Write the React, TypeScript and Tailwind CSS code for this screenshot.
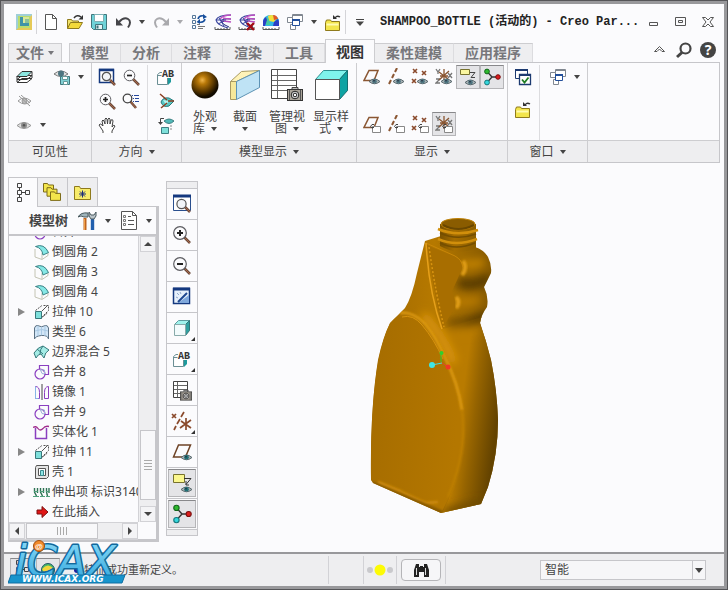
import React, { useState } from "react";
import clsx from "clsx";

type IcProps = { w?: number; h?: number; children?: React.ReactNode };

// Base wrapper for all toolbar drawings
const Ic = ({ w = 18, h = 18, children }: IcProps) => (
  <svg width={w} height={h} viewBox={`0 0 ${w} ${h}`} fill="none" aria-hidden="true" className="shrink-0">
    {children}
  </svg>
);

const Caret = ({ color = "#444" }: { color?: string }) => (
  <svg width="6" height="4" viewBox="0 0 6 4" aria-hidden="true" className="inline-block shrink-0">
    <path d="M0 0h6L3 4z" fill={color} />
  </svg>
);

// ---- shared icon fragments ----

const EyeShape = ({ x = 0, y = 0, c = "#4d7580" }) => (
  <g transform={`translate(${x} ${y})`}>
    <path d="M0 3.500Q5.500-1.500 11 3.500Q5.500 8 0 3.500z" fill="#aab3b6" stroke="#59686d" />
    <circle cx="5.500" cy="3.300" r="2.300" fill={c} />
    <circle cx="5" cy="2.700" r=".8" fill="#223" />
  </g>
);

const TagShape = ({ x = 0, y = 0 }) => (
  <g transform={`translate(${x} ${y})`} stroke="#444">
    <path d="M2.500 2.500h8v6h-8z" fill="#fff" stroke="#888" />
    <path d="M4 .5H2L.5 2.500l2 2M1 3.500h3" />
  </g>
);

const Handle = ({ d = "M11 11l6 6" }) => (
  <>
    <path d={d} stroke="#6b4a3a" strokeWidth="2.600" />
    <path d={d} stroke="#a8674a" strokeWidth="1" />
  </>
);

const FolderShape = ({ x = 0, y = 0 }) => (
  <g transform={`translate(${x} ${y})`}>
    <path d="M.5 3.500V11.500h14v-9h-8l-1-1.500h-4z" fill="#f3e54b" stroke="#8f7a1c" />
    <path d="M1.500 4.500h12v2h-12z" fill="#fffbb0" />
  </g>
);

const CameraShape = ({ x = 0, y = 0, s = 1 }) => (
  <g transform={`translate(${x} ${y}) scale(${s})`}>
    <path d="M5 2V.5h6V2" fill="#bbb" stroke="#444" />
    <rect x=".5" y="2.500" width="15" height="11" fill="#aaa49a" stroke="#333" />
    <path d="M2.500 3v10M13.500 3v10" stroke="#555" />
    <circle cx="8" cy="8" r="3.800" fill="#ddd" stroke="#222" />
    <circle cx="8" cy="8" r="1.800" fill="#fff" stroke="#222" />
  </g>
);

// ---- quick access icons ----

const AppIcon = () => (
  <Ic w={16} h={16}>
    <rect width="16" height="16" fill="#9fcfd8" />
    <path d="M0 16h16V1z" fill="#e6ca58" />
    <path d="M2 2h12v12H2z" fill="#b9dc6e" />
    <path d="M4 3v9h9V9H7V3z" fill="#3f93a8" />
    <path d="M7 3h6v6H7z" fill="#d9e89a" />
    <path d="M9 5h4v4H9z" fill="#8cc09a" />
  </Ic>
);
const NewIcon = () => (
  <Ic w={14} h={16}>
    <path d="M1.500.5h7l4 4v11h-11z" fill="#fff" stroke="#555" />
    <path d="M8.500.5v4h4" stroke="#555" />
  </Ic>
);
const OpenIcon = () => (
  <Ic w={18} h={16}>
    <path d="M1.500 14.500v-9h4l1 1.500h6v2" fill="#f2e36a" stroke="#8f7a1c" />
    <path d="M1.500 14.500l3-6h12l-3.500 6z" fill="#f4d93a" stroke="#8f7a1c" />
    <path d="M8 4q3-4 7-1" stroke="#333" strokeWidth="1.500" />
    <path d="M17 1v4.500h-4.500z" fill="#333" />
  </Ic>
);
const SaveIcon = () => (
  <Ic w={16} h={16}>
    <path d="M.5.5h15v15h-13l-2-2z" fill="#6ed3d8" stroke="#41767c" />
    <path d="M3.500.5h9v7h-9z" fill="#fff" stroke="#7fb1b5" />
    <path d="M4.500 10.500h7v5h-7z" fill="#e9f5f6" stroke="#41767c" />
    <path d="M5.500 11.500h2v3h-2z" fill="#41767c" />
  </Ic>
);
const UndoIcon = ({ flip = false, color = "#454549" }) => (
  <Ic w={17} h={16}>
    <g transform={flip ? "translate(17 0) scale(-1 1)" : undefined}>
      <path d="M4 8q5-5.500 9-3t0 8.500" stroke={color} strokeWidth="2" />
      <path d="M1 4v7.500h7z" fill={color} />
    </g>
  </Ic>
);
const RegenIcon = () => (
  <Ic w={16} h={16}>
    <path d="M1.500 1.500h3v3h-3zM1.500 6.500h3v3h-3zM1.500 11.500h3v3h-3z" stroke="#579" />
    <path d="M7 12.500h7M7 14.500h5M6 10.500h3" stroke="#777" />
    <path d="M7 5q1-4 6-3M14 5q-1 4-6 3" stroke="#174f9c" strokeWidth="1.600" />
    <path d="M12 0l4 3-4 2zM9 5L5.500 8 9 10z" fill="#174f9c" />
  </Ic>
);
const MeshShape = () => (
  <>
    <path d="M17 1Q4 1 2 6q1 5 12 8" stroke="#35409c" strokeWidth="1.200" />
    <path d="M17 5Q9 4 7 7q2 4 8 6" stroke="#222b80" />
    <path d="M17 1Q9 1 6 5M17 8q-6-1-10-1M17 5q-5 0-8-1" stroke="#b94fc0" strokeWidth="1.400" />
    <path d="M5 4l5 8M2 6l10 0M4 10l6-3" stroke="#35409c" />
    <path d="M1 13v2.500h15V13M4 14v2M7 14v2M10 14v2M13 14v2" stroke="#555" />
  </>
);
const MeshIcon = () => <Ic w={18} h={17}><MeshShape /></Ic>;
const MeshOffIcon = () => (
  <Ic w={18} h={17}>
    <MeshShape />
    <path d="M9 9l7 7M16 9l-7 7" stroke="#a00d16" strokeWidth="2.400" />
  </Ic>
);
const RainbowIcon = () => (
  <Ic w={18} h={17}>
    <path d="M1 12V6q2-5 8-5t8 5v6z" fill="#31b8e8" />
    <path d="M6 2q5-3 9 2l-3 4-5-1z" fill="#f2df3a" />
    <path d="M11 1q4 0 5 4l-4 1z" fill="#e05a28" />
    <path d="M4 3q4 1 4 8H4z" fill="#46c8a0" />
    <path d="M1 12V7q1-3 3-4l1 3-2 6zM12 8l4-3 1 3v4h-6z" fill="#2c3fc4" />
    <path d="M1 13v2.500h16V13M4 14v2M7 14v2M10 14v2M13 14v2" stroke="#555" />
  </Ic>
);
const WindowsIcon = () => (
  <Ic w={16} h={16}>
    <path d="M5.500.5h10v7h-10z" fill="#fff" stroke="#808790" />
    <path d="M5 1.500h11" stroke="#808790" />
    <path d="M.5 3.500h5v5h-5zM3.500 10.500h5v5h-5z" fill="#fff" stroke="#808790" />
    <path d="M5.500 5.500h7v6h-7z" fill="#fff" stroke="#234f9a" />
    <path d="M5 6h8" stroke="#234f9a" strokeWidth="2" />
  </Ic>
);
const CloseFolderIcon = () => (
  <Ic w={16} h={17}>
    <FolderShape y={5} />
    <path d="M10 4q2-3 5-1" stroke="#333" strokeWidth="1.300" />
    <path d="M8 1v4h4z" fill="#333" />
  </Ic>
);

// ---- ribbon: visibility ----

const LayersIcon = () => (
  <Ic w={17} h={14}>
    <path d="M1 12.500h10l5-4H6zM1 9.500h10l5-4H6z" fill="#fff" stroke="#333" />
    <path d="M1 6.500h10l5-5H6z" fill="#8be6e0" stroke="#333" />
    <path d="M1 6v6M16 2v6" stroke="#333" />
  </Ic>
);
const EyeSaveIcon = () => (
  <Ic w={17} h={17}>
    <path d="M0 5Q7-1 14 5q-7 5-14 0z" fill="#e3e3e3" stroke="#777" />
    <circle cx="7" cy="4.500" r="3" fill="#4d7580" />
    <path d="M6.500 7.500h9v8h-9z" fill="#7fd0d4" stroke="#41767c" />
    <path d="M8.500 7.500h5v3h-5zM9.500 12.500h4v3h-4z" fill="#fff" stroke="#699" />
  </Ic>
);
const EyeOffIcon = () => (
  <Ic w={15} h={12}>
    <path d="M1 6q6-6 13 0-6 6-13 0z" stroke="#999" />
    <circle cx="7.500" cy="6" r="2.500" fill="#bbb" stroke="#999" />
    <path d="M2 1l11 10M4 0l9 8" stroke="#999" />
  </Ic>
);
const EyeGreyIcon = () => (
  <Ic w={16} h={11}>
    <path d="M1 5.500q7-6 14 0-7 6-14 0z" fill="#ddd" stroke="#999" />
    <circle cx="8" cy="5.200" r="3" fill="#8c8c8c" />
    <circle cx="8" cy="5.200" r="1.200" fill="#555" />
  </Ic>
);

// ---- ribbon: orientation ----

const RefitIcon = () => (
  <Ic w={18} h={18}>
    <path d="M1.500 1.500h14v13h-14z" fill="#fff" stroke="#14387f" strokeWidth="1.500" />
    <path d="M1 2h15" stroke="#14387f" strokeWidth="2.500" />
    <Handle d="M12 12l5 5" />
    <circle cx="8.500" cy="8.500" r="4.200" fill="#f2f5f8" stroke="#555" strokeWidth="1.200" />
  </Ic>
);
const ZoomIcon = ({ plus = false }) => (
  <Ic w={20} h={20}>
    <Handle d="M12 12l6 6" />
    <circle cx="8" cy="8" r="6.300" fill="#fbfbfd" stroke="#5d5d62" strokeWidth="1.200" />
    <path d={plus ? "M5 8h6M8 5v6" : "M5 8h6"} stroke="#222" strokeWidth="2" />
  </Ic>
);
const SmallZoomIcon = ({ plus = false }) => (
  <Ic w={17} h={17}>
    <Handle d="M10 10l6 6" />
    <circle cx="6.500" cy="6.500" r="5.300" fill="#fbfbfd" stroke="#5d5d62" />
    <path d={plus ? "M4 6.500h5M6.500 4v5" : "M4 6.500h5"} stroke="#222" strokeWidth="1.700" />
  </Ic>
);
const ZoomListIcon = () => (
  <Ic w={18} h={16}>
    <Handle d="M8 8l6 7" />
    <circle cx="5.500" cy="5.500" r="4.300" fill="#fbfbfd" stroke="#444" strokeWidth="1.300" />
    <path d="M10 2.500h1M12 2.500h5M11 5.500h1M13 5.500h4M11 8.500h1M13 8.500h4" stroke="#27489b" />
  </Ic>
);
const HandIcon = () => (
  <Ic w={18} h={17}>
    <path
      d="M5 16v-2L1 8q1-2 3 0l1 1-1-5q1-2 2 0l1 3V2q1-2 2 0l.5 5L10 2q1-2 2 0v5l1-4q2-1 2 1l-1 6q2-3 3-1l-3 5v2"
      fill="#fff"
      stroke="#444"
    />
  </Ic>
);

const AbShape = () => (
  <>
    <path d="M5 3.500H3L.5 5.500v10h10V9M.5 6.500h4" stroke="#6b8f94" />
    <path d="M11 16l3-3V9h-3z" fill="#1d9a9c" />
    <path d="M2 8h8v7H2z" fill="#fff" />
    <text x="5" y="8" fontFamily="'Liberation Mono', monospace" fontSize="10" fontWeight="700" fill="#333">AB</text>
  </>
);
const NamedViewIcon = () => <Ic w={18} h={17}><AbShape /></Ic>;
const ReorientIcon = () => (
  <Ic w={17} h={16}>
    <path d="M3 9q2-5 8-4l5 3-5 5q-6 2-8-4z" fill="#58c7c4" stroke="#2b7a7c" />
    <path d="M5 7l6 1-3 4z" fill="#b9f2ee" />
    <path d="M2 1l7 6M3 15l6-5M10 8h6" stroke="#8b3f22" strokeWidth="1.500" />
  </Ic>
);
const PrevViewIcon = () => (
  <Ic w={17} h={17}>
    <path d="M6 4q5-4 10 0-5 5-10 0z" fill="#4fb9b8" stroke="#3d7f82" />
    <path d="M3.500 10.500h7v6h-7z" fill="#7ee0da" stroke="#3d7f82" />
    <path d="M6 1.500H2.500v5" stroke="#444" />
    <path d="M0 5h5L2.500 8z" fill="#444" />
    <path d="M13 8v5" stroke="#888" strokeDasharray="2 1" />
  </Ic>
);

// ---- ribbon: model display ----

const SphereIcon = () => (
  <Ic w={30} h={32}>
    <defs>
      <radialGradient id="ball" cx=".4" cy=".32" r=".62">
        <stop offset="0" stopColor="#f0b54a" />
        <stop offset=".25" stopColor="#b87808" />
        <stop offset=".7" stopColor="#573600" />
        <stop offset="1" stopColor="#120b00" />
      </radialGradient>
    </defs>
    <circle cx="15" cy="16" r="13.500" fill="url(#ball)" />
  </Ic>
);
const SectionIcon = () => (
  <Ic w={32} h={32}>
    <path d="M1.500 12.500l11-10 18-1-23 11z" fill="#fff3b8" stroke="#a99b62" />
    <path d="M1.500 12.500h6v18h-6z" fill="#f6e89a" stroke="#a99b62" />
    <path d="M7.500 12.500l23-11v17l-23 12z" fill="#bfe3f5" stroke="#5d93b4" />
  </Ic>
);
const SheetShape = () => (
  <>
    <path d="M.5.5h25v29H.5z" fill="#fff" stroke="#444" />
    <path d="M1 6.500h24M1 11.500h24M1 16.500h24M1 21.500h24M6.500 1v28" stroke="#666" />
  </>
);
const ManageViewIcon = () => (
  <Ic w={33} h={33}>
    <SheetShape />
    <CameraShape x={16} y={18} />
  </Ic>
);
const StyleIcon = () => (
  <Ic w={33} h={32}>
    <path d="M.5 10.500l8-9h24l-8 9z" fill="#7ff3ec" stroke="#2f8f90" />
    <path d="M24.500 10.500l8-9v20l-8 9z" fill="#0fa3a3" stroke="#156e70" />
    <path d="M.5 10.500h24v20H.5z" fill="#fff" stroke="#555" />
  </Ic>
);

// ---- ribbon: show ----

type Overlay = "eye" | "tag";
const Over = ({ kind }: { kind: Overlay }) => (kind === "eye" ? <EyeShape x={6} y={10} /> : <TagShape x={7} y={9} />);

const PlaneIcon = ({ over }: { over: Overlay }) => (
  <Ic><path d="M1 12.500h10l4-10H6z" stroke="#8a5632" strokeWidth="1.500" /><Over kind={over} /></Ic>
);
const AxisIcon = ({ over }: { over: Overlay }) => (
  <Ic><path d="M10 0L8 4M7 6l-2 4M4 12l-2 4" stroke="#8a5632" strokeWidth="2" /><Over kind={over} /></Ic>
);
const PointIcon = ({ over }: { over: Overlay }) => (
  <Ic>
    <path d="M2 1l4 4M6 1L2 5M11 3l4 4M15 3l-4 4M1 11l4 4M5 11l-4 4" stroke="#8a4a2c" strokeWidth="1.600" />
    <Over kind={over} />
  </Ic>
);
const CsysIcon = ({ over }: { over: Overlay }) => (
  <Ic>
    <path d="M1 1l2 3 2-3M3 4v2M1 11h4l-4 4h4M13 5l4 5M17 5l-4 5" stroke="#777" strokeWidth="1.300" />
    <path d="M9 1v13M4 4l9 7M14 3L4 12M5 8h8" stroke="#8a5632" strokeWidth="1.300" />
    <Over kind={over} />
  </Ic>
);
const NoteIcon = () => (
  <Ic>
    <path d="M1.500 1.500h9v5h-9z" fill="#fbf7a0" stroke="#77722e" />
    <path d="M11 4.500h5l-4 5h4" stroke="#444" />
    <EyeShape x={6} y={11} />
  </Ic>
);
const SpinIcon = ({ size = 18 }) => (
  <svg width={size} height={size} viewBox="0 0 18 18" fill="none" aria-hidden="true">
    <path d="M4 3.500l5 5.500h6M9 9l-5 5.500" stroke="#333" strokeWidth="1.300" />
    <circle cx="4" cy="3.500" r="2.400" fill="#2eb82e" stroke="#12661a" />
    <circle cx="15" cy="9" r="2.300" fill="#dd1d1d" stroke="#7b1010" />
    <circle cx="4" cy="14.500" r="2.400" fill="#35d6dc" stroke="#14787c" />
  </svg>
);
const ActivateIcon = () => (
  <Ic>
    <path d="M1.500 1.500h12v9h-12z" fill="#fff" stroke="#1c3a70" />
    <path d="M1 2h13" stroke="#1c3a70" strokeWidth="2" />
    <path d="M5.500 6.500h11v10h-11z" fill="#fff" stroke="#1c3a70" strokeWidth="1.300" />
    <path d="M5 7h12" stroke="#1c3a70" strokeWidth="2" />
    <path d="M8 11.500l2.500 3 4-5" stroke="#1e7d22" strokeWidth="1.800" />
  </Ic>
);

// ---- tree icons ----

const MergeIcon = () => (
  <Ic w={16} h={16}>
    <path d="M5.500 5.500v-4h9v9h-4" stroke="#8a3fc0" strokeWidth="1.200" />
    <circle cx="6" cy="10" r="5" stroke="#8a3fc0" strokeWidth="1.200" />
    <path d="M6.500 6h4v4q-3 1-4-4z" stroke="#9fb4d8" />
  </Ic>
);
const RoundIcon = () => (
  <Ic w={16} h={16}>
    <path d="M1 5v8l7 2.500 6-4V8" fill="#fbfbfd" stroke="#c4c4b4" />
    <path d="M8 9v6" stroke="#c4c4b4" />
    <path d="M1.500 2.500Q10-1 14.500 8.500L9 11Q8 4 1.500 2.500z" fill="#86e8e6" stroke="#3c8285" />
  </Ic>
);
const ExtrudeIcon = () => (
  <Ic w={16} h={16}>
    <path d="M1.500 6.500L8 1.500M7 14.500l7-6M9.500 1.500h5v5l-7 7" stroke="#555" strokeDasharray="2 1" />
    <path d="M1.500 7.500h6v7h-6z" fill="#7ee0dc" stroke="#39777a" />
    <path d="M8 7l5-5" stroke="#555" />
  </Ic>
);
const TypeIcon = () => (
  <Ic w={17} h={16}>
    <path d="M1.500 4q1-3 3-2.500 4 2.500 8 0 2-.5 3 2.500v11q-1-4-7-3.500T1.500 15z" fill="#d2e6f7" stroke="#5b7184" />
    <path d="M5 2v10M8.500 3v8M12 2v10M2 7q7-3 13 0" stroke="#a9c9e4" />
  </Ic>
);
const BlendIcon = () => (
  <Ic w={17} h={15}>
    <path d="M1 8q4-6 9-7l6 4q-4 2-5 8l-3-4q-3 0-5 4z" fill="#a4ece6" stroke="#35787a" />
    <path d="M4 4l6 5M10 1q-3 3-3 8" stroke="#35787a" />
  </Ic>
);
const MirrorIcon = () => (
  <Ic w={16} h={16}>
    <path d="M8 0v16" stroke="#444" />
    <path d="M1.500 14.500v-12q4 0 4 6v6zM14.500 14.500v-12q-4 0-4 6v6z" stroke="#8a3fc0" />
    <path d="M1.500 2.500v12h3" stroke="#88b6e6" />
  </Ic>
);
const SolidifyIcon = () => (
  <Ic w={17} h={15}>
    <path d="M2.500 3v10.500h11V3" stroke="#8a3fc0" strokeWidth="1.500" />
    <path d="M0 2.500q3-2 5 1t5 0q2-3 6-2" stroke="#a02d8c" strokeWidth="1.300" />
  </Ic>
);
const ShellIcon = () => (
  <Ic w={14} h={14}>
    <path d="M1.500.5h12v11l-2 2h-11v-11z" fill="#e4e4e4" stroke="#555" />
    <path d="M3.500 3.500h7v7h-7z" fill="#fff" stroke="#555" />
    <path d="M5.500 5.500h3v5h-3z" fill="#8fe6e6" stroke="#3b8c90" />
  </Ic>
);
const ProtrusionIcon = () => (
  <Ic w={17} h={12}>
    <path d="M1.500 2v4l2 4M4.500 2v5M7.500 2v4l2 4M10.500 2v5M13.500 2v4l1 4M16 2v5" stroke="#2e7354" strokeWidth="1.400" />
    <path d="M0 10.500h6M7 10.500h5M13 10.500h4M1 5.500h4M7 5.500h4M13 5.500h3" stroke="#4fa07c" />
  </Ic>
);
const InsertIcon = () => (
  <Ic w={14} h={12}>
    <path d="M2 4h5V.5L13 6l-6 5.500V8H2z" fill="#e01616" stroke="#7c1010" />
  </Ic>
);

// ---- left panel / side toolbar icons ----

const TreeGlyph = () => (
  <Ic w={15} h={20}>
    <path d="M1.500.5h4v4h-4zM1.500 7.500h4v4h-4zM1.500 14.500h4v4h-4zM9.500 7.500h4v4h-4zM3.500 5v2M3.500 12v2M6 9.500h3" stroke="#444" />
  </Ic>
);
const FoldersGlyph = () => (
  <Ic w={20} h={20}>
    {[0, 3.5, 7].map((o) => (
      <path key={o} d="M.5 1.500h4l1 1.500h5v7h-10z" transform={`translate(${o} ${o * 1.2})`} fill="#f3e54b" stroke="#7d6c1a" />
    ))}
  </Ic>
);
const FavGlyph = () => (
  <Ic w={17} h={16}>
    <path d="M.5 15.500v-13h5l1 2h10v11z" fill="#f8ec6a" stroke="#8f7a1c" />
    <path d="M8.500 6.500v7M5 10h7M6 7.500l5 5M11 7.500l-5 5" stroke="#1b2d7a" />
  </Ic>
);
const ToolsGlyph = () => (
  <Ic w={19} h={20}>
    <path d="M7 7v12" stroke="#c0641e" strokeWidth="3" />
    <path d="M6.500 8v11" stroke="#f0a04a" />
    <path d="M0 6q3-5 10-4v4H6Q3 4 0 6z" fill="#9fb4bb" stroke="#4b5b60" />
    <path d="M14.500 8v11" stroke="#215fae" strokeWidth="3.400" />
    <path d="M11 1v4l2 3h3l2-3V1l-2 3h-3z" fill="#b9c3c8" stroke="#4b5b60" />
  </Ic>
);
const ListGlyph = () => (
  <Ic w={17} h={19}>
    <path d="M.5.5h11l4 4v14H.5z" fill="#fff" stroke="#555" />
    <path d="M11.500.5v4h4M7 5.500h3M7 9.500h6M7 13.500h6" stroke="#555" />
    <path d="M2.500 4.500h2v2h-2zM2.500 8.500h2v2h-2zM2.500 12.500h2v2h-2z" stroke="#777" />
  </Ic>
);
const RepaintGlyph = () => (
  <Ic w={20} h={20}>
    <path d="M1.500 1.500h16v15h-16z" fill="#e6f0fb" stroke="#14387f" strokeWidth="1.500" />
    <path d="M1 2h17" stroke="#14387f" strokeWidth="3" />
    <path d="M17 8v8H6z" fill="#7fa8dc" />
    <path d="M15 6l-7 7-2 2" stroke="#1d468f" strokeWidth="2" />
    <path d="M5 6l2 2M8 5l1 2M4 10l2 1" stroke="#8fa7cc" />
  </Ic>
);
const BigRefitGlyph = () => (
  <Ic w={20} h={20}>
    <path d="M1.500 1.500h17v15h-17z" fill="#fff" stroke="#2a4f8e" />
    <path d="M1 2h18" stroke="#14387f" strokeWidth="3" />
    <Handle d="M13 13l5 5" />
    <circle cx="9.500" cy="10" r="4.600" fill="#f2f5f8" stroke="#555" strokeWidth="1.200" />
  </Ic>
);
const CubeGlyph = () => (
  <Ic w={18} h={18}>
    <path d="M1.500 5.500l4-4h11l-4 4z" fill="#9ff2ec" stroke="#5d9c9e" />
    <path d="M12.500 5.500l4-4v10l-4 5z" fill="#2fa09f" stroke="#2f7779" />
    <path d="M1.500 5.500h11v11h-11z" fill="#f2fbfc" stroke="#8aa" />
  </Ic>
);
const SheetCamGlyph = () => (
  <Ic w={21} h={21}>
    <path d="M1.500 1.500h14v16h-14z" fill="#fff" stroke="#444" />
    <path d="M2 5.500h13M2 9.500h13M2 13.500h9M5.500 2v15" stroke="#666" />
    <CameraShape x={8} y={10} s={0.75} />
  </Ic>
);
const DatumGlyph = () => (
  <Ic w={22} h={20}>
    <path d="M1 3l4 4M5 3L1 7M13 1l-3 5M9 8l-3 5M5 15l-2 4M15 7v12M10 10l10 7M20 9L9 17" stroke="#8a4a2c" strokeWidth="1.700" />
  </Ic>
);
const BigPlaneGlyph = () => (
  <Ic w={21} h={19}>
    <path d="M1.500 14h12l5-12h-12z" stroke="#6e4326" strokeWidth="1.500" />
    <EyeShape x={9} y={11} c="#1f7076" />
  </Ic>
);
const BigNoteGlyph = () => (
  <Ic w={21} h={21}>
    <path d="M1.500 1.500h11v8h-11z" fill="#fbf78e" stroke="#77722e" />
    <path d="M12 5.500h7l-5 6M14 8v4h3" stroke="#333" />
    <EyeShape x={9} y={13} c="#1f7076" />
  </Ic>
);

// Square icon button used on the quick access bar and in the ribbon
const Tool = ({ label, pressed, children }: { label: string; pressed?: boolean; children: React.ReactNode }) => (
  <button
    aria-label={label}
    aria-pressed={pressed}
    className={clsx(
      "flex h-6 w-6 shrink-0 items-center justify-center",
      pressed && "border border-[#b5b5b8] border-t-[#88888b] bg-[#e4e4e7]"
    )}
  >
    {children}
  </button>
);

const Drop = ({ label, color }: { label: string; color?: string }) => (
  <button aria-label={label} className="flex h-6 w-3.5 shrink-0 items-center justify-center">
    <Caret color={color} />
  </button>
);

const Group = ({ title, arrow, children, className }: { title: string; arrow?: boolean; children: React.ReactNode; className: string }) => (
  <section className={clsx("flex shrink-0 flex-col border-r border-[#cdcdd0]", className)}>
    <div className="flex h-[77px] px-[3px] pt-[2px]">{children}</div>
    <div className="flex h-[22px] items-center justify-center gap-1.5 border-t border-[#cdcdd0] bg-[#eeeef0] text-[#444]">
      {title}
      {arrow && <Caret />}
    </div>
  </section>
);

const BigTool = ({ icon, first, second, className }: { icon: React.ReactNode; first: string; second?: string; className: string }) => (
  <button className={clsx("flex flex-col items-center leading-3 text-[#444]", className)}>
    <span className="flex h-10 items-center">{icon}</span>
    <span className="mt-1.5 whitespace-nowrap">{first}</span>
    <span className="flex h-3 items-center gap-1.5">
      {second}
      <Caret />
    </span>
  </button>
);

const TABS = ["模型", "分析", "注释", "渲染", "工具", "视图", "柔性建模", "应用程序"];

const TREE = [
  { label: "合并 7", icon: <MergeIcon /> },
  { label: "倒圆角 2", icon: <RoundIcon /> },
  { label: "倒圆角 3", icon: <RoundIcon /> },
  { label: "倒圆角 4", icon: <RoundIcon /> },
  { label: "拉伸 10", icon: <ExtrudeIcon />, open: true },
  { label: "类型 6", icon: <TypeIcon /> },
  { label: "边界混合 5", icon: <BlendIcon /> },
  { label: "合并 8", icon: <MergeIcon /> },
  { label: "镜像 1", icon: <MirrorIcon /> },
  { label: "合并 9", icon: <MergeIcon /> },
  { label: "实体化 1", icon: <SolidifyIcon /> },
  { label: "拉伸 11", icon: <ExtrudeIcon />, open: true },
  { label: "壳 1", icon: <ShellIcon /> },
  { label: "伸出项 标识3140", icon: <ProtrusionIcon />, open: true },
  { label: "在此插入", icon: <InsertIcon /> },
];

const SIDE = [
  { label: "重新调整", icon: <BigRefitGlyph /> },
  { label: "放大", icon: <ZoomIcon plus /> },
  { label: "缩小", icon: <ZoomIcon /> },
  { label: "重画", icon: <RepaintGlyph /> },
  { label: "显示样式", icon: <CubeGlyph />, more: true },
  { label: "已命名视图", icon: <Ic w={20} h={20}><g transform="translate(1 2)"><AbShape /></g></Ic>, more: true },
  { label: "视图管理器", icon: <SheetCamGlyph /> },
  { label: "基准显示", icon: <DatumGlyph />, more: true },
  { label: "平面显示", icon: <BigPlaneGlyph /> },
  { label: "注释显示", icon: <BigNoteGlyph />, pressed: true },
  { label: "旋转中心", icon: <SpinIcon size={20} />, pressed: true },
];

const TitleBar = () => (
  <header className="flex h-9 items-center pr-1">
    <div className="flex h-6 items-center border-r border-[#d4d4d8] pl-3 pr-1">
      <AppIcon />
    </div>
    <div className="ml-0.5 flex">
      <Tool label="新建"><NewIcon /></Tool>
      <Tool label="打开"><OpenIcon /></Tool>
      <Tool label="保存"><SaveIcon /></Tool>
      <Tool label="撤消"><UndoIcon /></Tool>
      <Drop label="撤消列表" />
      <Tool label="重做"><UndoIcon flip color="#a9a9ad" /></Tool>
      <Drop label="重做列表" color="#a9a9ad" />
      <Tool label="重新生成"><RegenIcon /></Tool>
      <Tool label="网格"><MeshIcon /></Tool>
      <Tool label="关闭网格"><MeshOffIcon /></Tool>
      <Tool label="着色曲率"><RainbowIcon /></Tool>
      <Tool label="窗口"><WindowsIcon /></Tool>
      <Drop label="窗口列表" />
      <Tool label="关闭"><CloseFolderIcon /></Tool>
    </div>
    <div className="flex h-6 items-center border-l border-[#d4d4d8] pl-2">
      <button aria-label="自定义工具栏" className="flex h-6 w-3 items-center justify-center">
        <Ic w={8} h={7}><path d="M0 .5h8" stroke="#444" /><path d="M0 2.500h8L4 7z" fill="#444" /></Ic>
      </button>
    </div>
    <h1 className="ml-3.5 min-w-0 flex-1 truncate font-['Liberation_Mono','Noto_Sans_CJK_SC',monospace] text-xs font-bold text-[#222]">
      SHAMPOO_BOTTLE (活动的) - Creo Par...
    </h1>
    <div className="flex gap-[3px]">
      <Tool label="最小化"><Ic w={10} h={10}><path d="M.5 5.500h8v3h-8z" stroke="#555" /></Ic></Tool>
      <Tool label="最大化"><Ic w={12} h={10}><path d="M.5.5h10v8H.5zM3.500 3.500h4v2h-4z" stroke="#555" /></Ic></Tool>
      <Tool label="关闭窗口">
        <Ic w={12} h={10}>
          <path d="M.5.5h3L6 3 8.500.500h3L8 5l3.500 4.500h-3L6 7 3.500 9.500h-3L4 5z" stroke="#555" />
        </Ic>
      </Tool>
    </div>
  </header>
);

const TabBar = () => {
  const [active, setActive] = useState("视图");
  return (
    <nav className="flex h-[22px] items-end pl-1 pr-2 text-sm font-bold text-[#77777b]">
      <button className="mr-[7px] flex h-[19px] items-center gap-1 border border-b-0 border-[#cdcdd0] bg-[#eeeef0] px-[7px]">
        文件
        <Caret color="#77777b" />
      </button>
      {TABS.map((tab) => (
        <button
          key={tab}
          onClick={() => setActive(tab)}
          className={clsx(
            "flex items-center border-t",
            tab === active
              ? "relative -mb-px h-[24px] border-x border-[#cdcdd0] bg-[#fbfbfd] px-2.5 text-[#333]"
              : "h-[19px] border-r border-t-[#cdcdd0] border-r-[#dcdcdf] bg-[#eeeef0] px-[11px]",
            tab === "模型" && "border-l border-l-[#cdcdd0]"
          )}
        >
          {tab}
        </button>
      ))}
      <div className="ml-auto flex items-center">
        <Tool label="最小化功能区">
          <Ic w={12} h={9}><path d="M.5 5.500l5-5 5 5H8L5.500 3 3 5.500z" stroke="#555" /></Ic>
        </Tool>
        <Tool label="命令搜索">
          <Ic w={17} h={17}>
            <circle cx="9.500" cy="6.500" r="5" stroke="#444" strokeWidth="2.200" />
            <path d="M6 10.500l-5 4.500" stroke="#444" strokeWidth="3" />
          </Ic>
        </Tool>
        <button aria-label="帮助" className="ml-1 flex h-4 w-4 items-center justify-center rounded-full bg-[#444] text-sm leading-4 text-white">
          ?
        </button>
      </div>
    </nav>
  );
};

const Ribbon = () => (
  <div className="mx-1 flex border border-[#c6c6ca] bg-[#fbfbfd] text-xs">
    <Group title="可见性" className="w-[83px]">
      <div className="flex flex-col">
        <div className="flex">
          <Tool label="层"><LayersIcon /></Tool>
          <span className="w-3.5" />
          <Tool label="保存状况"><EyeSaveIcon /></Tool>
          <Drop label="状况列表" />
        </div>
        <Tool label="隐藏"><EyeOffIcon /></Tool>
        <div className="flex">
          <Tool label="显示"><EyeGreyIcon /></Tool>
          <Drop label="显示列表" />
        </div>
      </div>
    </Group>
    <Group title="方向" arrow className="w-[90px]">
      <div className="grid grid-cols-2 content-start">
        <Tool label="重新调整"><RefitIcon /></Tool>
        <Tool label="缩小"><SmallZoomIcon /></Tool>
        <Tool label="放大"><SmallZoomIcon plus /></Tool>
        <Tool label="缩放至选定"><ZoomListIcon /></Tool>
        <Tool label="平移"><HandIcon /></Tool>
      </div>
      <div className="ml-1 flex flex-col border-l border-[#dcdcdf] pl-1.5">
        <Tool label="已命名视图"><NamedViewIcon /></Tool>
        <Tool label="标准方向"><ReorientIcon /></Tool>
        <Tool label="上一个"><PrevViewIcon /></Tool>
      </div>
    </Group>
    <Group title="模型显示" arrow className="w-[175px]">
      <BigTool className="w-10" icon={<SphereIcon />} first="外观" second="库" />
      <BigTool className="w-10" icon={<SectionIcon />} first="截面" />
      <BigTool className="w-11" icon={<ManageViewIcon />} first="管理视" second="图" />
      <BigTool className="w-11" icon={<StyleIcon />} first="显示样" second="式" />
    </Group>
    <Group title="显示" arrow className="w-[151px]">
      <div className="flex flex-col justify-between pb-1">
        <div className="flex">
          <Tool label="平面显示"><PlaneIcon over="eye" /></Tool>
          <Tool label="轴显示"><AxisIcon over="eye" /></Tool>
          <Tool label="点显示"><PointIcon over="eye" /></Tool>
          <Tool label="坐标系显示"><CsysIcon over="eye" /></Tool>
          <Tool label="注释显示" pressed><NoteIcon /></Tool>
          <Tool label="旋转中心" pressed><SpinIcon /></Tool>
        </div>
        <div className="flex">
          <Tool label="平面标记"><PlaneIcon over="tag" /></Tool>
          <Tool label="轴标记"><AxisIcon over="tag" /></Tool>
          <Tool label="点标记"><PointIcon over="tag" /></Tool>
          <Tool label="坐标系标记" pressed><CsysIcon over="tag" /></Tool>
        </div>
      </div>
    </Group>
    <Group title="窗口" arrow className="w-20">
      <div className="flex flex-col gap-2 border-r border-[#dcdcdf] pr-1">
        <Tool label="激活"><ActivateIcon /></Tool>
        <Tool label="关闭"><CloseFolderIcon /></Tool>
      </div>
      <div className="ml-1.5 flex">
        <Tool label="窗口"><WindowsIcon /></Tool>
        <Drop label="窗口列表" />
      </div>
    </Group>
    <div className="flex flex-1 flex-col">
      <div className="h-[77px]" />
      <div className="h-[22px] border-t border-[#cdcdd0] bg-[#eeeef0]" />
    </div>
  </div>
);

const ScrollArrow = ({ label, d }: { label: string; d: string }) => (
  <button aria-label={label} className="flex h-4 w-4 shrink-0 items-center justify-center border border-[#d2d2d6] bg-[#f4f4f6]">
    <Ic w={8} h={8}><path d={d} fill="#444" /></Ic>
  </button>
);

const ModelTree = () => (
  <aside className="w-[151px] shrink-0 pt-3.5">
    <div className="flex">
      <button aria-label="模型树" className="-mb-px flex h-[30px] w-[30px] items-center justify-center border border-b-0 border-[#c6c6ca] bg-[#fbfbfd]">
        <TreeGlyph />
      </button>
      <button aria-label="文件夹浏览器" className="flex h-[29px] w-[30px] items-center justify-center border border-l-0 border-b-0 border-[#c6c6ca] bg-[#eeeef0]">
        <FoldersGlyph />
      </button>
      <button aria-label="收藏夹" className="flex h-[29px] w-[30px] items-center justify-center border border-l-0 border-b-0 border-[#c6c6ca] bg-[#eeeef0]">
        <FavGlyph />
      </button>
    </div>
    <div className="border border-b-[3px] border-r-[3px] border-[#c6c6ca]">
      <div className="flex h-[27px] items-center pl-5 text-[13px] font-bold text-[#444]">
        <h2>模型树</h2>
        <button aria-label="设置" className="ml-2.5 mr-1"><ToolsGlyph /></button>
        <Drop label="设置列表" />
        <button aria-label="显示选项" className="ml-1.5 mr-1"><ListGlyph /></button>
        <Drop label="显示列表" />
      </div>
      <div className="flex border-t-2 border-[#c6c6ca]">
        <ul role="tree" className="min-w-0 flex-1 overflow-hidden">
          {TREE.map((row, i) => (
            <li
              key={row.label}
              role="treeitem"
              className={clsx("flex h-5 items-center whitespace-nowrap text-xs text-[#444]", i === 0 && "-mt-3.5")}
            >
              <span className="flex w-6 shrink-0 justify-center">
                {row.open && <Ic w={7} h={8}><path d="M0 0l7 4-7 4z" fill="#888" /></Ic>}
              </span>
              <span className="mr-0.5 flex w-[17px] shrink-0 justify-center">{row.icon}</span>
              {row.label}
            </li>
          ))}
        </ul>
        <div className="flex w-[18px] flex-col items-center border-l border-[#d2d2d6] bg-[#eeeef0]">
          <ScrollArrow label="向上滚动" d="M0 6h8L4 2z" />
          <span className="flex-1" />
          <span className="mb-1.5 flex h-[70px] w-4 items-center justify-center border border-[#c6c6ca] bg-[#f8f8fa]">
            <Ic w={8} h={12}><path d="M0 1.500h8M0 4.500h8M0 7.500h8M0 10.500h8" stroke="#aaa" /></Ic>
          </span>
          <ScrollArrow label="向下滚动" d="M0 2h8L4 6z" />
        </div>
      </div>
      <div className="flex h-[17px] items-center">
        <div className="flex flex-1 items-center border-y border-[#d2d2d6] bg-[#eeeef0]">
          <ScrollArrow label="向左滚动" d="M6 0v8L2 4z" />
          <span className="mx-px flex h-4 w-[72px] items-center justify-center border border-[#c6c6ca] bg-[#f8f8fa]">
            <Ic w={12} h={8}><path d="M1.500 0v8M4.500 0v8M7.500 0v8M10.500 0v8" stroke="#aaa" /></Ic>
          </span>
          <span className="flex-1" />
          <ScrollArrow label="向右滚动" d="M2 0v8l4-4z" />
        </div>
        <span className="w-[18px]" />
      </div>
    </div>
  </aside>
);

const SideToolbar = () => (
  <div role="toolbar" className="ml-[7px] mt-[18px] flex w-8 shrink-0 flex-col self-start border border-[#c6c6ca]">
    <span className="h-[6px] bg-[#eeeef0]" />
    {SIDE.map((item) => (
      <button
        key={item.label}
        aria-label={item.label}
        aria-pressed={item.pressed}
        className="relative flex h-[31px] items-center justify-center border-t border-[#c6c6ca] p-px"
      >
        <span
          className={clsx(
            "flex h-full w-full items-center justify-center",
            item.pressed && "border border-[#b5b5b8] border-t-[#88888b] bg-[#e4e4e7]"
          )}
        >
          {item.icon}
        </span>
        {item.more && (
          <span className="absolute bottom-0.5 right-0.5 flex">
            <Ic w={4} h={4}><path d="M4 0v4H0z" fill="#333" /></Ic>
          </span>
        )}
      </button>
    ))}
    <span className="h-[6px] border-t border-[#c6c6ca] bg-[#eeeef0]" />
  </div>
);

const BODY =
  "M65 36L81 31L115 42Q124 45 128 52Q132 60 131 68Q127 76 124 82Q129 92 127 102Q121 110 120 118Q126 135 131 155Q137 185 138 215Q138 250 128 282L121 299L81 308L13 278L11 275Q10 205 18 155Q23 132 30 118L45 103Q52 92 57 68z";

// Shaded shampoo bottle shown in the graphics window
const Bottle = () => (
  <svg width="150" height="315" viewBox="0 0 150 315" fill="none" role="img" aria-label="SHAMPOO_BOTTLE">
    <defs>
      <linearGradient id="body" x1="0" y1="0" x2="1" y2="0">
        <stop offset="0" stopColor="#a06800" />
        <stop offset=".5" stopColor="#b67900" />
        <stop offset="1" stopColor="#7f5500" />
      </linearGradient>
      <linearGradient id="side" gradientUnits="userSpaceOnUse" x1="92" y1="200" x2="138" y2="206">
        <stop offset=".2" stopColor="#b97b00" />
        <stop offset=".5" stopColor="#966400" />
        <stop offset="1" stopColor="#644300" />
      </linearGradient>
      <linearGradient id="face" x1="0" y1="0" x2="1" y2=".2">
        <stop offset="0" stopColor="#a56c00" />
        <stop offset="1" stopColor="#b47700" />
      </linearGradient>
      <linearGradient id="neck" x1="0" y1="0" x2="1" y2="0">
        <stop offset="0" stopColor="#7a5200" />
        <stop offset=".4" stopColor="#a56d00" />
        <stop offset="1" stopColor="#8b5e00" />
      </linearGradient>
      <filter id="soft" x="-50%" y="-50%" width="200%" height="200%">
        <feGaussianBlur stdDeviation="4" />
      </filter>
      <filter id="fine" x="-20%" y="-20%" width="140%" height="140%">
        <feGaussianBlur stdDeviation="1" />
      </filter>
      <clipPath id="bodyClip"><path d={BODY} /></clipPath>
    </defs>
    <path d={BODY} fill="url(#body)" />
    <g clipPath="url(#bodyClip)">
      <path d="M80 125L122 112Q150 200 130 300L81 310Q104 265 104 225Q102 185 80 140z" fill="url(#side)" />
      <g filter="url(#soft)">
        <path d="M130 73Q112 83 98 77" stroke="#533700" strokeWidth="10" />
        <path d="M128 109Q108 121 88 120" stroke="#533700" strokeWidth="9" />
        <path d="M102 58Q114 62 124 56" stroke="#cb8803" strokeWidth="7" />
        <path d="M97 96Q108 99 120 94" stroke="#c48203" strokeWidth="6" />
        <path d="M62 110Q80 124 94 158" stroke="#dc960a" strokeWidth="8" />
        <path d="M88 126Q104 124 116 126" stroke="#b87a00" strokeWidth="8" />
        <path d="M84 308L122 298" stroke="#6d4900" strokeWidth="8" />
      </g>
      <path d="M103 56Q108 62 102 70M96 92Q101 97 96 103" stroke="#e09d16" strokeWidth="4" filter="url(#fine)" />
      <path d="M11 275Q9 160 30 118Q40 105 54 109Q70 120 85 153Q104 190 104 228Q102 270 81 308z" fill="url(#face)" />
      <path d="M40 108Q52 106 64 118Q76 132 85 153Q98 178 102 205" stroke="#e09c14" strokeWidth="2.500" filter="url(#fine)" />
      <path d="M102 205Q108 246 88 292" stroke="#bf8006" strokeWidth="2" filter="url(#fine)" />
      <path d="M42 112Q53 109 62 120Q74 134 83 154" stroke="#d6920f" />
      <path d="M18 277L40 286Q56 294 66 298L78 297" stroke="#cf8c0c" strokeWidth="2.500" filter="url(#fine)" />
      <path d="M12 279L82 308" stroke="#885a00" strokeWidth="5" filter="url(#fine)" />
    </g>
    <path d="M67 40L95 52Q104 57 101 66Q95 80 92 86Q96 96 95 104Q88 112 83 124Q76 100 67 40z" fill="#a86e00" />
    <path d="M66 38L95 51Q102 55 103 62" stroke="#c98608" />
    <path d="M66 38Q69 88 82 124" stroke="#e6a01a" strokeWidth="1.500" />
    <path d="M69 42Q75 85 84 122" stroke="#d9940f" strokeWidth="1.500" strokeDasharray="2 2" />
    <path d="M80 19h36v24q-18 8-36-2z" fill="url(#neck)" />
    <ellipse cx="98" cy="19" rx="17" ry="5.500" fill="#8a5c00" stroke="#c08207" />
    <path d="M83 20Q98 28 114 20" stroke="#6a4700" strokeWidth="2" />
    <path d="M78 24Q97 32 118 25M78 34Q96 42 117 34" stroke="#d18f0c" strokeWidth="2.500" />
    <path d="M80 28Q97 36 116 29M80 38Q96 46 115 38" stroke="#744e00" strokeWidth="1.500" />
    <path d="M81 148v9" stroke="#2ed12e" />
    <path d="M82 158l-10 2" stroke="#48e0d8" />
    <path d="M82 158l6 4" stroke="#e4452a" />
    <circle cx="81.500" cy="148" r="2" fill="#2ed12e" />
    <circle cx="72" cy="160" r="3" fill="#3fe6e6" />
    <circle cx="88" cy="162" r="2.500" fill="#ef3a24" />
  </svg>
);

const Logo = () => (
  <svg width="122" height="46" viewBox="0 0 122 46" role="img" aria-label="iCAX">
    <defs>
      <linearGradient id="ice" x1="0" y1="0" x2="0" y2="1">
        <stop offset="0" stopColor="#8fdcf8" />
        <stop offset="1" stopColor="#2ba4dc" />
      </linearGradient>
    </defs>
    <text
      x="7"
      y="36"
      fontFamily="'DejaVu Sans', sans-serif"
      fontSize="43"
      fontStyle="italic"
      fill="url(#ice)"
      stroke="#12699c"
      strokeWidth="3"
      strokeLinejoin="round"
      paintOrder="stroke"
    >
      iCAX
    </text>
    <circle cx="31" cy="6" r="5.500" fill="#f28a2c" stroke="#a34c0c" />
    <text x="27" y="9" fontFamily="'Liberation Sans', sans-serif" fontSize="8" fontWeight="700" fill="#fff">@</text>
    <path d="M3 35h114l-3 8H0z" fill="#1794cc" stroke="#0e6fa3" />
    <text x="14" y="42" fontFamily="'DejaVu Sans', sans-serif" fontSize="9" fontStyle="italic" fontWeight="700" fill="#fff">
      WWW.ICAX.ORG
    </text>
  </svg>
);

const StatusBar = () => (
  <footer className="relative flex h-[34px] items-center border-t-2 border-[#98989b] bg-[#eeeef0] text-xs text-[#444]">
    <div className="flex gap-0.5 pl-1.5">
      <Tool label="导航器" pressed><TreeGlyph /></Tool>
      <Tool label="浏览器" pressed>
        <Ic w={16} h={14}>
          <circle cx="8" cy="7" r="6.500" fill="#48b86a" stroke="#256" />
          <path d="M2 6q6-7 12 0-6 0-9 5z" fill="#f2d63a" />
        </Ic>
      </Tool>
    </div>
    <p className="ml-3.5 flex items-center gap-1 text-[11px]">
      <span className="h-1.5 w-1.5 rounded-full bg-[#1b1fa0]" />
      特征成功重新定义。
    </p>
    <div className="ml-auto flex h-7 items-center border-l border-[#d2d2d6] pl-[34px]">
      <div className="flex h-7 items-center border-x border-[#d2d2d6] px-[3px]">
        <Ic w={26} h={12}>
          <circle cx="3" cy="6" r="3" fill="#c9c9cc" />
          <circle cx="13" cy="6" r="5.500" fill="#fdfb05" />
          <circle cx="23" cy="6" r="3" fill="#c9c9cc" />
        </Ic>
      </div>
      <button aria-label="查找" className="mx-1 flex h-[22px] w-10 items-center justify-center rounded-sm border border-[#b5b5b8] bg-[#f6f6f8]">
        <Ic w={17} h={16}>
          <path d="M3 2h3v3h1V4h3v1h1V2h3l2 6v7h-5v-5H6v5H1V8z" fill="#222" />
          <path d="M3.500 6v7M12.500 6v7" stroke="#ddd" />
        </Ic>
      </button>
      <span className="h-7 border-l border-[#d2d2d6]" />
    </div>
    <div className="relative ml-[94px] mr-[18px] w-[166px]">
      <select aria-label="选择过滤器" className="h-5 w-full appearance-none border border-[#c6c6ca] bg-[#f6f6f8] pl-1 text-xs text-[#444]">
        <option>智能</option>
      </select>
      <span className="pointer-events-none absolute inset-y-0 right-0 flex w-3.5 items-center justify-center border border-[#c6c6ca]">
        <Ic w={8} h={5}><path d="M0 0h8L4 5z" fill="#444" /></Ic>
      </span>
    </div>
    <div className="absolute bottom-0 left-1">
      <Logo />
    </div>
  </footer>
);

const App = () => (
  <div className="flex min-h-screen flex-col border border-[#555558] bg-[#98989b] p-[3px] font-['Noto_Sans','Noto_Sans_CJK_SC',sans-serif]">
    <div className="flex flex-1 flex-col bg-[#fbfbfd]">
      <TitleBar />
      <TabBar />
      <Ribbon />
      <main className="flex flex-1 pl-1">
        <ModelTree />
        <SideToolbar />
        <div className="flex min-w-0 flex-1 justify-center pr-[52px] pt-[42px]">
          <Bottle />
        </div>
      </main>
      <StatusBar />
    </div>
  </div>
);

export default App;
